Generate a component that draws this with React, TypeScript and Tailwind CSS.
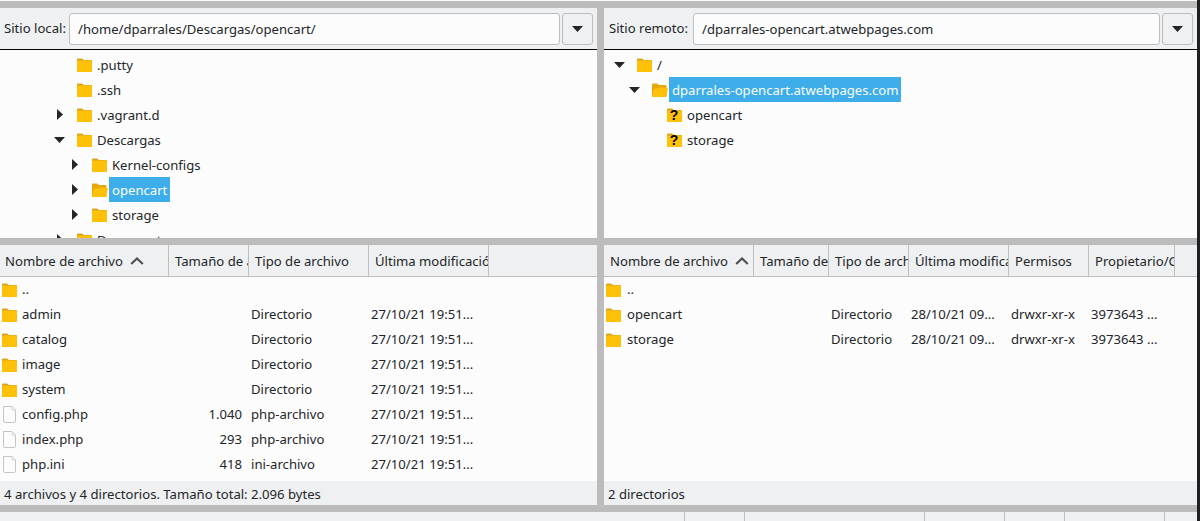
import React from "react";

const Folder = ({ open = false }: { open?: boolean }) =>
  open ? (
    <svg width="16" height="14" viewBox="0 0 16 14" className="shrink-0 -mr-[1px]">
      <path d="M0 1.5 Q0 .5 1 .5 H5 L7 2 H13.5 Q14.5 2 14.5 3 V13 Q14.5 14 13.5 14 H1 Q0 14 0 13 Z" fill="#e6a70a" />
      <path d="M0 13 L1.5 6.5 Q1.7 5.5 3 5.5 H6 L7.5 4.5 H14.5 Q16 4.5 15.8 6 L14.5 13.2 Q14.4 14 13.5 14 H1 Q0 14 0 13 Z" fill="#ffc107" />
    </svg>
  ) : (
    <svg width="15" height="14" viewBox="0 0 15 14" className="shrink-0">
      <path d="M0 1.5 Q0 .5 1 .5 H5 L7 2 H14 Q15 2 15 3 V13 Q15 14 14 14 H1 Q0 14 0 13 Z" fill="#d9a520" />
      <path d="M0 3.5 Q0 2.5 1 2.5 H14 Q15 2.5 15 3.5 V13 Q15 14 14 14 H1 Q0 14 0 13 Z" fill="#ffc107" />
    </svg>
  );

const Unknown = () => (
  <div className="relative w-[14px] h-[14px] shrink-0 mr-[1px]">
    <Folder />
    <span className="absolute inset-0 flex items-center justify-center text-[14px] font-bold text-black leading-none pt-[1px] font-['Liberation_Sans',sans-serif]">?</span>
  </div>
);

const FileIcon = () => (
  <svg width="15" height="17" viewBox="0 0 15 17" className="shrink-0">
    <path d="M1.5 .5 H10 L13.5 4 V15 Q13.5 16.5 12 16.5 H3 Q1.5 16.5 1.5 15 Z" fill="#fcfcfc" stroke="#c4c5c6" />
    <path d="M10 .5 V4 H13.5" fill="none" stroke="#d4d5d6" />
  </svg>
);

const Arrow = ({ down = false }: { down?: boolean }) =>
  down ? (
    <svg width="11" height="6" viewBox="0 0 11 6"><path d="M0 0 H11 L5.5 6 Z" fill="#232629" /></svg>
  ) : (
    <svg width="6" height="11" viewBox="0 0 6 11"><path d="M0 0 L6 5.5 L0 11 Z" fill="#232629" /></svg>
  );

const Tree = ({ className, arrow, icon, label, selected }: { className: string; arrow?: "r" | "d"; icon: React.ReactNode; label: string; selected?: boolean }) => (
  <div className={`h-[25px] shrink-0 flex items-center ${className}`}>
    <div className="w-[20px] shrink-0 flex justify-start">{arrow && <Arrow down={arrow === "d"} />}</div>
    {icon}
    <span className={`ml-[2px] h-[25px] leading-[27px] px-[3px] ${selected ? "bg-[#3daee9] text-[#fcfcfc]" : ""}`}>{label}</span>
  </div>
);

const PathBar = ({ label, value, labelW }: { label: string; value: string; labelW: string }) => (
  <div className="h-[41px] shrink-0 flex items-center pl-[4px] pr-[4px] bg-[#eff0f1]">
    <span className={`shrink-0 pt-[1px] ${labelW}`}>{label}</span>
    <div className="flex-1 h-[32px] rounded-[3px] border border-[#bcbebf] bg-[#fcfcfc] flex items-center pl-[8px] pt-[2px]">{value}</div>
    <div className="ml-[2px] w-[31px] h-[32px] rounded-[3px] border border-[#bcbebf] bg-[#eff0f1] flex items-center justify-center">
      <svg width="11" height="6" viewBox="0 0 11 6"><path d="M0 0 H11 L5.5 6 Z" fill="#232629" /></svg>
    </div>
  </div>
);

const Head = ({ w, label, sort, flex, pl = "pl-[6px]" }: { w: string; label?: string; sort?: boolean; flex?: boolean; pl?: string }) => (
  <div className={`${w} ${pl} ${flex ? "flex-1" : "shrink-0 border-r border-[#bcbebf]"} h-full flex items-center pt-[2px] overflow-hidden whitespace-nowrap`}>
    {label}
    {sort && (
      <svg width="14" height="8" viewBox="0 0 14 8" className="ml-[7px] -mt-[1px] shrink-0"><path d="M1.2 7 L7 1.5 L12.8 7" fill="none" stroke="#4d4d4d" strokeWidth="2" /></svg>
    )}
  </div>
);

const Gray = ({ className }: { className: string }) => <div className={`bg-[#bcbcbc] shrink-0 ${className}`} />;

type FileRow = { icon: "f" | "d"; name: string; size?: string; type?: string };

const localRows: FileRow[] = [
  { icon: "d", name: ".." },
  { icon: "d", name: "admin", type: "Directorio" },
  { icon: "d", name: "catalog", type: "Directorio" },
  { icon: "d", name: "image", type: "Directorio" },
  { icon: "d", name: "system", type: "Directorio" },
  { icon: "f", name: "config.php", size: "1.040", type: "php-archivo" },
  { icon: "f", name: "index.php", size: "293", type: "php-archivo" },
  { icon: "f", name: "php.ini", size: "418", type: "ini-archivo" },
];

export default function App() {
  return (
    <div className="w-[1200px] h-[521px] overflow-hidden flex bg-[#1d2125] text-[13.12px] text-[#232629] font-['Noto_Sans',sans-serif]">
      <div className="w-[1197px] h-full flex flex-col bg-[#eff0f1]">
        <div className="h-[1px] shrink-0 bg-[#fcfcfc]" />
        <Gray className="h-[7px]" />
        <div className="flex h-[497px] shrink-0">
          {/* left */}
          <div className="w-[597px] shrink-0 flex flex-col">
            <PathBar label="Sitio local:" value="/home/dparrales/Descargas/opencart/" labelW="w-[65px]" />
            <div className="h-[1px] bg-black shrink-0" />
            <div className="h-[188px] shrink-0 bg-[#fcfcfc] pt-[2px] overflow-hidden flex flex-col">
              <Tree className="pl-[57px]" icon={<Folder />} label=".putty" />
              <Tree className="pl-[57px]" icon={<Folder />} label=".ssh" />
              <Tree className="pl-[57px]" arrow="r" icon={<Folder />} label=".vagrant.d" />
              <Tree className="pl-[54px]" arrow="d" icon={<div className="ml-[3px]"><Folder /></div>} label="Descargas" />
              <Tree className="pl-[72px]" arrow="r" icon={<Folder />} label="Kernel-configs" />
              <Tree className="pl-[72px]" arrow="r" icon={<Folder open />} label="opencart" selected />
              <Tree className="pl-[72px]" arrow="r" icon={<Folder />} label="storage" />
              <Tree className="pl-[57px]" arrow="r" icon={<Folder />} label="Documentos" />
            </div>
            <Gray className="h-[7px]" />
            <div className="h-[31px] shrink-0 flex bg-[#eff0f1]">
              <Head w="w-[169px]" pl="pl-[5px]" label="Nombre de archivo" sort />
              <Head w="w-[80px]" label="Tamaño de archivo" />
              <Head w="w-[120px]" label="Tipo de archivo" />
              <Head w="w-[120px]" label="Última modificación" />
              <Head w="w-[108px]" flex />
            </div>
            <div className="h-[1px] bg-[#bcbebf] shrink-0" />
            <div className="h-[204px] shrink-0 bg-[#fcfcfc] flex flex-col overflow-hidden">
              {localRows.map((r) => (
                <div key={r.name} className="h-[25px] shrink-0 flex items-center">
                  <div className="w-[22px] shrink-0 pl-[2px]">{r.icon === "d" ? <Folder /> : <FileIcon />}</div>
                  <span className="w-[146px] shrink-0">{r.name}</span>
                  <span className="w-[74px] shrink-0 text-right">{r.size}</span>
                  <span className="w-[120px] shrink-0 pl-[9px]">{r.type}</span>
                  {r.type && <span className="pl-[9px]">27/10/21 19:51...</span>}
                </div>
              ))}
            </div>
            <div className="h-[24px] shrink-0 flex items-center pl-[4px] pt-[3px] bg-[#eff0f1]">4 archivos y 4 directorios. Tamaño total: 2.096 bytes</div>
          </div>
          <Gray className="w-[7px] h-[497px]" />
          {/* right */}
          <div className="flex-1 min-w-0 flex flex-col">
            <PathBar label="Sitio remoto:" value="/dparrales-opencart.atwebpages.com" labelW="w-[85px] pl-[1px]" />
            <div className="h-[1px] bg-black shrink-0" />
            <div className="h-[188px] shrink-0 bg-[#fcfcfc] pt-[2px] overflow-hidden flex flex-col">
              <Tree className="pl-[10px]" arrow="d" icon={<div className="ml-[3px]"><Folder /></div>} label="/" />
              <Tree className="pl-[25px]" arrow="d" icon={<div className="ml-[3px]"><Folder open /></div>} label="dparrales-opencart.atwebpages.com" selected />
              <Tree className="pl-[43px]" icon={<Unknown />} label="opencart" />
              <Tree className="pl-[43px]" icon={<Unknown />} label="storage" />
            </div>
            <Gray className="h-[7px]" />
            <div className="h-[31px] shrink-0 flex bg-[#eff0f1]">
              <Head w="w-[150px]" label="Nombre de archivo" sort />
              <Head w="w-[75px]" label="Tamaño de archivo" />
              <Head w="w-[80px]" label="Tipo de archivo" />
              <Head w="w-[100px]" label="Última modificación" />
              <Head w="w-[80px]" label="Permisos" />
              <Head w="w-[86px]" label="Propietario/Grupo" />
              <Head w="w-[22px]" flex />
            </div>
            <div className="h-[1px] bg-[#bcbebf] shrink-0" />
            <div className="h-[204px] shrink-0 bg-[#fcfcfc] flex flex-col overflow-hidden">
              {["..", "opencart", "storage"].map((n) => (
                <div key={n} className="h-[25px] shrink-0 flex items-center">
                  <div className="w-[23px] shrink-0 pl-[2px]"><Folder /></div>
                  <span className="w-[204px] shrink-0">{n}</span>
                  {n !== ".." && (
                    <>
                      <span className="w-[80px] shrink-0">Directorio</span>
                      <span className="w-[100px] shrink-0">28/10/21 09...</span>
                      <span className="w-[80px] shrink-0">drwxr-xr-x</span>
                      <span className="shrink-0">3973643 ...</span>
                    </>
                  )}
                </div>
              ))}
            </div>
            <div className="h-[24px] shrink-0 flex items-center pl-[4px] pt-[3px] bg-[#eff0f1]">2 directorios</div>
          </div>
        </div>
        <Gray className="h-[7px]" />
        <div className="flex-1 flex bg-[#eff0f1]">
          <div className="w-[685px] shrink-0 border-r border-[#bcbebf]" />
          <div className="w-[60px] shrink-0 border-r border-[#bcbebf]" />
          <div className="w-[180px] shrink-0 border-r border-[#bcbebf]" />
          <div className="w-[80px] shrink-0 border-r border-[#bcbebf]" />
          <div className="w-[60px] shrink-0 border-r border-[#bcbebf]" />
          <div className="w-[100px] shrink-0 border-r border-[#bcbebf]" />
        </div>
      </div>
    </div>
  );
}
